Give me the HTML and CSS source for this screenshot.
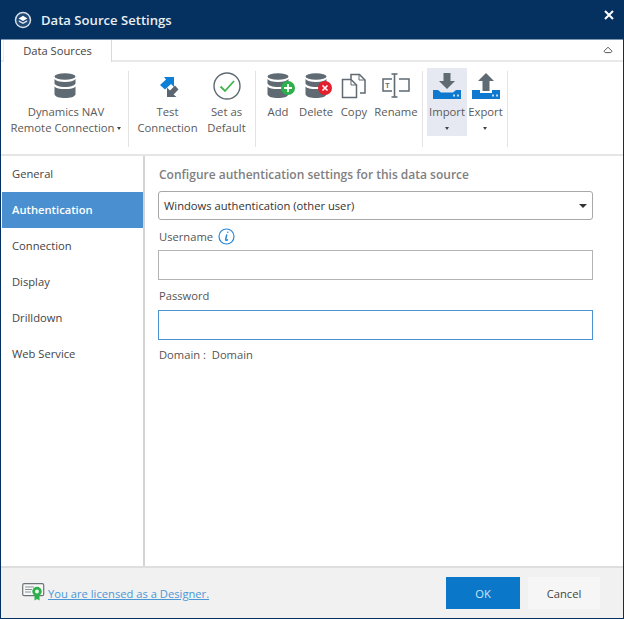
FILE: index.html
```html
<!DOCTYPE html>
<html lang="en">
<head>
<meta charset="utf-8">
<title>Data Source Settings</title>
<link rel="stylesheet" href="styles.css">
</head>
<body>
<div class="window">
  <header class="titlebar">
    <svg class="app-icon" width="18" height="18" viewBox="0 0 18 18"><circle cx="9" cy="9" r="7.500" fill="#1f4a78" stroke="#d5dde6" stroke-width="1.500"/><path d="M9 4.800 13.400 7.400 9 10 4.600 7.400Z" fill="#fff"/><path d="M4.800 9.200 9 11.600l4.200-2.400v1.500L9 13l-4.200-2.300Z" fill="#e6ebf0"/></svg>
    <span class="title">Data Source Settings</span>
    <svg class="close" width="10" height="10" viewBox="0 0 10 10"><path d="M1 1l8 8M9 1l-8 8" stroke="#fff" stroke-width="2"/></svg>
  </header>

  <div class="tabrow">
    <div class="tab">Data Sources</div>
    <svg class="collapse" width="10" height="8" viewBox="0 0 10 8"><path d="M1 5.200 5 1.200l4 4-1.200 1.400H2.200Z" fill="none" stroke="#555" stroke-width="1"/></svg>
  </div>

  <div class="ribbon">
    <div class="group g1">
      <div class="rbtn w-nav">
        <svg class="ico" width="24" height="26" viewBox="0 0 24 26"><use href="#db"/></svg>
        <span class="lbl">Dynamics NAV<br>Remote Connection <i class="caret"></i></span>
      </div>
    </div>
    <div class="group g2">
      <div class="rbtn w-test">
        <svg class="ico" width="24" height="26" viewBox="0 0 24 26"><path d="M8 4h10v10l-3-3-6 5.500L4 12l6-5.500Z" fill="#0e7fd6"/><path d="M11 24V14.500l3 3 5-5 3.500 4-5 5 3 2.500Z" fill="#5b6670"/></svg>
        <span class="lbl">Test<br>Connection</span>
      </div>
      <div class="rbtn w-def">
        <svg class="ico" width="28" height="28" viewBox="0 0 28 28"><circle cx="14" cy="14" r="13" fill="#fff" stroke="#5f6a73" stroke-width="1.400"/><path d="M7.500 14.500 12 19l9-10" fill="none" stroke="#3fb54a" stroke-width="1.800"/></svg>
        <span class="lbl">Set as<br>Default</span>
      </div>
    </div>
    <div class="group g3">
      <div class="rbtn w-add">
        <svg class="ico" width="28" height="26" viewBox="0 0 28 26"><use href="#db"/><circle cx="21" cy="15" r="7" fill="#2db04b"/><path d="M21 11v8M17 15h8" stroke="#fff" stroke-width="1.800"/></svg>
        <span class="lbl">Add</span>
      </div>
      <div class="rbtn w-del">
        <svg class="ico" width="28" height="26" viewBox="0 0 28 26"><use href="#db"/><circle cx="20" cy="15" r="7" fill="#e3202c"/><path d="M17.500 12.500l5 5M22.500 12.500l-5 5" stroke="#fff" stroke-width="1.600"/></svg>
        <span class="lbl">Delete</span>
      </div>
      <div class="rbtn w-copy">
        <svg class="ico" width="26" height="26" viewBox="0 0 26 26"><path d="M10 6V1.500h8.500L24 7v13h-5M1.500 6.500H10l5.500 5.500v12.500H1.500Z" fill="none" stroke="#5f6a73" stroke-width="1.500"/><path d="M18 1.500V7h6M10 6.500V12h5.500" fill="none" stroke="#5f6a73" stroke-width="1"/></svg>
        <span class="lbl">Copy</span>
      </div>
      <div class="rbtn w-ren">
        <svg class="ico" width="28" height="26" viewBox="0 0 28 26"><path d="M10 6H1v12h9M17 6h10v12H17" fill="none" stroke="#5f6a73" stroke-width="1.500"/><path d="M9.500 1h6M9.500 24h6M12.500 1v23" fill="none" stroke="#5f6a73" stroke-width="1.600"/><text x="3.200" y="15" class="ren-t">T</text></svg>
        <span class="lbl">Rename</span>
      </div>
    </div>
    <div class="group g4">
      <div class="rbtn w-imp active">
        <svg class="ico" width="28" height="26" viewBox="0 0 28 26"><path d="M10.500 0h7v8H22l-8 8-8-8h4.500Z" fill="#5f6a73"/><path d="M0 17h5l3 2.500h12l3-2.500h5v9H0Z" fill="#0e79cf"/><path d="M20 21.500h2v2h-2ZM24 21.500h2v2h-2Z" fill="#bcdcf5"/></svg>
        <span class="lbl">Import<br><i class="caret"></i></span>
      </div>
      <div class="rbtn w-exp">
        <svg class="ico" width="28" height="26" viewBox="0 0 28 26"><path d="M14 0l8 8h-4.500v10h-7V8H6Z" fill="#5f6a73"/><path d="M0 17h8v3h12v-3h8v9H0Z" fill="#0e79cf"/><path d="M20 21.500h2v2h-2ZM24 21.500h2v2h-2Z" fill="#bcdcf5"/></svg>
        <span class="lbl">Export<br><i class="caret"></i></span>
      </div>
    </div>
  </div>

  <main class="body">
    <nav class="sidebar">
      <div class="nav-item">General</div>
      <div class="nav-item selected">Authentication</div>
      <div class="nav-item">Connection</div>
      <div class="nav-item">Display</div>
      <div class="nav-item">Drilldown</div>
      <div class="nav-item">Web Service</div>
    </nav>
    <section class="content">
      <h2 class="heading">Configure authentication settings for this data source</h2>
      <div class="select"><span>Windows authentication (other user)</span><i class="select-caret"></i></div>
      <div class="field-label username">Username
        <svg class="info" width="17" height="17" viewBox="0 0 17 17"><circle cx="8.500" cy="8.500" r="7.500" fill="none" stroke="#2a86d6" stroke-width="1.200"/><path d="M9.800 4.200v.01M8.700 7 7.600 11.600c-.1.900.8 1 1.800.2" fill="none" stroke="#2a86d6" stroke-width="1.500" stroke-linecap="round"/></svg>
      </div>
      <div class="input"></div>
      <div class="field-label password">Password</div>
      <div class="input focused"></div>
      <div class="domain">Domain :&nbsp; Domain</div>
    </section>
  </main>

  <footer class="footer">
    <svg class="lic" width="23" height="18" viewBox="0 0 23 18"><rect x=".7" y=".7" width="21" height="12" rx="1.500" fill="#f7f7f7" stroke="#6d7479" stroke-width="1.200"/><path d="M3 4h9M3 6.500h7M3 9h6" stroke="#8c9398" stroke-width="1"/><path d="M12.500 11v6.500l2.500-1.500 2.500 1.500V11Z" fill="#2bb04a"/><circle cx="15" cy="8.500" r="4.700" fill="#2bb04a"/><circle cx="15" cy="8.500" r="2" fill="#e8f6ea"/></svg>
    <a class="license" href="#">You are licensed as a Designer.</a>
    <div class="btn primary">OK</div>
    <div class="btn secondary">Cancel</div>
  </footer>
</div>
<svg class="defs" width="0" height="0"><defs>
  <g id="db" fill="#5f6a73">
    <ellipse cx="11" cy="3.500" rx="10.500" ry="3.200"/>
    <path d="M.5 6c1.500 2 5 3 10.500 3s9-1 10.500-3v4.500C20.500 12.800 16.500 14 11 14S1.500 12.800.5 10.500Z"/>
    <path d="M.5 14c1.500 1.800 5 2.600 10.500 2.600S20 15.800 21.500 14v8c-1 2.400-5 3.500-10.500 3.500S1.500 24.400.5 22Z" transform="translate(0 -.500)"/>
  </g>
</defs></svg>
</body>
</html>
```
FILE: styles.css
```css
* { box-sizing: border-box; }
html, body { margin: 0; height: 100%; }
body { font-family: "Open Sans", "Noto Sans", sans-serif; font-size: 11.200px; color: #444; background: #fff; }
.defs { position: absolute; }
.window { width: 624px; height: 619px; display: flex; flex-direction: column; border: 1px solid #04315f; border-top: 0; background: #fff; }

.titlebar { height: 39px; flex: none; background: #04315f; display: flex; align-items: center; padding: 0 10px 0 14px; color: #e9eef3; margin: 0 -1px; }
.title { font-size: 13.100px; font-weight: 600; margin-left: 9px; flex: 1; }
.close { margin-top: -10px; }

.tabrow { height: 23px; flex: none; display: flex; align-items: stretch; justify-content: space-between; border-bottom: 2px solid #e9e9e9; padding-left: 2px; padding-right: 10px; border-top: 1px solid #7e97b0; }
.tab { width: 109px; border-right: 1px solid #d9d9d9; border-left: 1px solid #ececec; text-align: center; font-size: 11.200px; color: #444; line-height: 21px; margin-bottom: -2px; background: #fff; }
.collapse { margin-top: 6px; }

.ribbon { height: 94px; flex: none; display: flex; padding-top: 6px; border-bottom: 2px solid #e6e6e6; }
.group { display: flex; border-right: 1px solid #e3e3e3; height: 76px; margin-top: 3px; }
.g1 { width: 128px; padding-left: 3px; }
.g2 { width: 127px; }
.g3 { width: 167px; padding-left: 3px; }
.g4 { width: 85px; padding-left: 4px; }
.rbtn { display: flex; flex-direction: column; align-items: center; height: 68px; margin-top: -3px; color: #5a5a5a; text-align: center; font-size: 11.300px; line-height: 16px; }
.ico { height: 28px; margin-top: 4px; flex: none; overflow: visible; }
.lbl { margin-top: 4px; white-space: nowrap; }
.w-nav { width: 124px; }
.w-test { width: 77px; }
.w-def { width: 41px; }
.w-add { width: 38px; }
.w-del { width: 38px; }
.w-add .ico, .w-del .ico { margin-left: 6px; }
.w-copy { width: 38px; }
.w-ren { width: 46px; }
.w-imp { width: 40px; }
.w-exp { width: 37px; }
.active { background: #e6e9f1; }
.caret { display: inline-block; width: 0; height: 0; border: 2.500px solid transparent; border-top: 3px solid #444; border-bottom: 0; vertical-align: middle; }
.ren-t { font-family: "Liberation Sans", sans-serif; font-size: 7px; fill: #5f6a73; font-weight: 700; }

.body { flex: 1; display: flex; min-height: 0; }
.sidebar { width: 144px; flex: none; border-right: 2px solid #d4d4d4; padding-left: 1px; }
.nav-item { height: 36px; line-height: 36px; padding-left: 10px; color: #444; }
.selected { background: #4a90d0; color: #fff; font-weight: 600; }
.content { flex: 1; padding: 0 30px 0 13px; }
.heading { margin: 10px 0 0 1px; font-size: 12px; font-weight: 600; color: #808080; line-height: 18px; }
.select { margin-top: 7px; height: 29px; border: 1px solid #a8a8a8; border-radius: 3px; display: flex; align-items: center; justify-content: space-between; padding: 0 5px; color: #333; }
.select-caret { width: 0; height: 0; border: 4px solid transparent; border-top: 4px solid #333; border-bottom: 0; }
.field-label { color: #555; display: flex; align-items: center; gap: 5px; height: 17px; margin-left: 1px; }
.username { margin-top: 8px; }
.password { margin-top: 7px; }
.input { margin-top: 5px; height: 30px; border: 1px solid #b3b3b3; }
.password + .input { margin-top: 6px; }
.focused { border-color: #4a93d0; }
.domain { margin: 7px 0 0 1px; color: #555; line-height: 16px; }

.footer { height: 52px; flex: none; background: #f1f1f1; border-top: 2px solid #dedede; display: flex; align-items: center; padding: 0 23px 0 21px; }
.lic { flex: none; margin-top: -2px; }
.license { margin-left: 3px; color: #4b97d6; text-decoration: underline; flex: 1; }
.btn { height: 32px; width: 74px; display: flex; align-items: center; justify-content: center; }
.primary { background: #0a77c9; color: #cfe6f7; margin-right: 8px; }
.secondary { background: #f6f6f6; width: 72px; color: #444; }
```
